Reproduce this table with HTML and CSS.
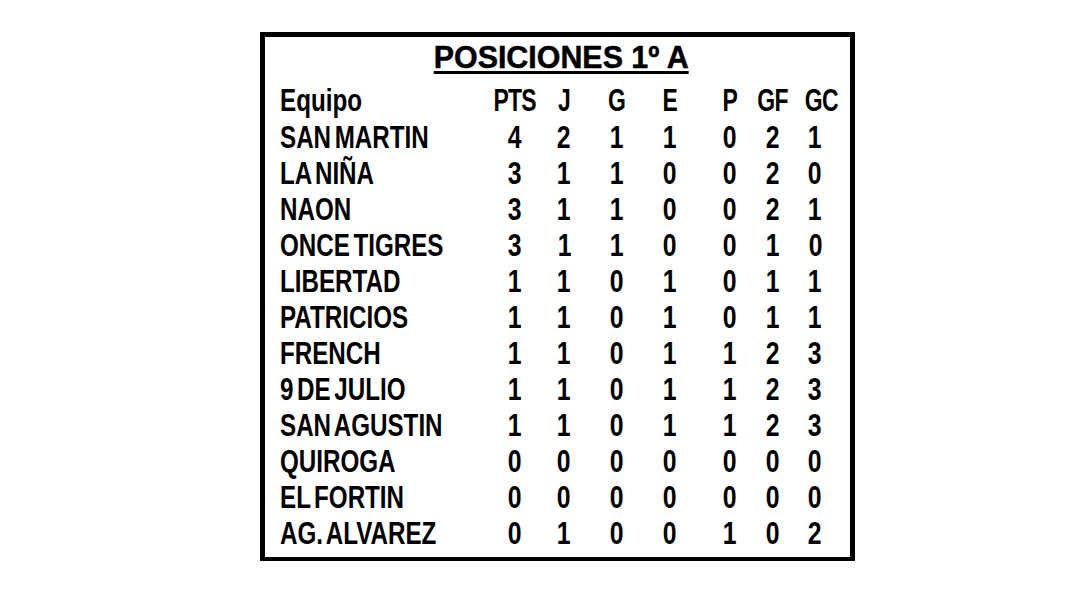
FILE: index.html
```html
<!DOCTYPE html>
<html lang="es">
<head>
<meta charset="utf-8">
<title>Posiciones 1º A</title>
<link rel="stylesheet" href="styles.css">
</head>
<body>
<div class="board">
  <h1 class="title"><span>POSICIONES 1º A</span></h1>
  <div class="table">
    <div class="row head">
      <div class="name"><span>Equipo</span></div>
      <div class="c pts"><span>PTS</span></div><div class="c j"><span>J</span></div><div class="c g"><span>G</span></div><div class="c e"><span>E</span></div><div class="c p"><span>P</span></div><div class="c gf"><span>GF</span></div><div class="c gc gch"><span>GC</span></div>
    </div>
    <div class="row"><div class="name"><span>SAN MARTIN</span></div><div class="c pts"><span>4</span></div><div class="c j"><span>2</span></div><div class="c g"><span>1</span></div><div class="c e"><span>1</span></div><div class="c p"><span>0</span></div><div class="c gf"><span>2</span></div><div class="c gc"><span>1</span></div></div>
    <div class="row"><div class="name"><span>LA NIÑA</span></div><div class="c pts"><span>3</span></div><div class="c j"><span>1</span></div><div class="c g"><span>1</span></div><div class="c e"><span>0</span></div><div class="c p"><span>0</span></div><div class="c gf"><span>2</span></div><div class="c gc"><span>0</span></div></div>
    <div class="row"><div class="name"><span>NAON</span></div><div class="c pts"><span>3</span></div><div class="c j"><span>1</span></div><div class="c g"><span>1</span></div><div class="c e"><span>0</span></div><div class="c p"><span>0</span></div><div class="c gf"><span>2</span></div><div class="c gc"><span>1</span></div></div>
    <div class="row"><div class="name"><span>ONCE TIGRES</span></div><div class="c pts"><span>3</span></div><div class="c j"><span>1</span></div><div class="c g"><span>1</span></div><div class="c e"><span>0</span></div><div class="c p"><span>0</span></div><div class="c gf"><span>1</span></div><div class="c gc"><span>0</span></div></div>
    <div class="row"><div class="name"><span>LIBERTAD</span></div><div class="c pts"><span>1</span></div><div class="c j"><span>1</span></div><div class="c g"><span>0</span></div><div class="c e"><span>1</span></div><div class="c p"><span>0</span></div><div class="c gf"><span>1</span></div><div class="c gc"><span>1</span></div></div>
    <div class="row"><div class="name"><span>PATRICIOS</span></div><div class="c pts"><span>1</span></div><div class="c j"><span>1</span></div><div class="c g"><span>0</span></div><div class="c e"><span>1</span></div><div class="c p"><span>0</span></div><div class="c gf"><span>1</span></div><div class="c gc"><span>1</span></div></div>
    <div class="row"><div class="name"><span>FRENCH</span></div><div class="c pts"><span>1</span></div><div class="c j"><span>1</span></div><div class="c g"><span>0</span></div><div class="c e"><span>1</span></div><div class="c p"><span>1</span></div><div class="c gf"><span>2</span></div><div class="c gc"><span>3</span></div></div>
    <div class="row"><div class="name"><span>9 DE JULIO</span></div><div class="c pts"><span>1</span></div><div class="c j"><span>1</span></div><div class="c g"><span>0</span></div><div class="c e"><span>1</span></div><div class="c p"><span>1</span></div><div class="c gf"><span>2</span></div><div class="c gc"><span>3</span></div></div>
    <div class="row"><div class="name"><span>SAN AGUSTIN</span></div><div class="c pts"><span>1</span></div><div class="c j"><span>1</span></div><div class="c g"><span>0</span></div><div class="c e"><span>1</span></div><div class="c p"><span>1</span></div><div class="c gf"><span>2</span></div><div class="c gc"><span>3</span></div></div>
    <div class="row"><div class="name"><span>QUIROGA</span></div><div class="c pts"><span>0</span></div><div class="c j"><span>0</span></div><div class="c g"><span>0</span></div><div class="c e"><span>0</span></div><div class="c p"><span>0</span></div><div class="c gf"><span>0</span></div><div class="c gc"><span>0</span></div></div>
    <div class="row"><div class="name"><span>EL FORTIN</span></div><div class="c pts"><span>0</span></div><div class="c j"><span>0</span></div><div class="c g"><span>0</span></div><div class="c e"><span>0</span></div><div class="c p"><span>0</span></div><div class="c gf"><span>0</span></div><div class="c gc"><span>0</span></div></div>
    <div class="row"><div class="name"><span>AG. ALVAREZ</span></div><div class="c pts"><span>0</span></div><div class="c j"><span>1</span></div><div class="c g"><span>0</span></div><div class="c e"><span>0</span></div><div class="c p"><span>1</span></div><div class="c gf"><span>0</span></div><div class="c gc"><span>2</span></div></div>
  </div>
</div>
</body>
</html>
```

FILE: styles.css
```css
html, body {
  margin: 0;
  padding: 0;
  background: #ffffff;
}

body {
  font-family: "Liberation Sans", Arial, sans-serif;
  color: #000000;
}

.board {
  box-sizing: border-box;
  width: 595px;
  height: 529px;
  margin: 32px 0 0 260px;
  border-style: solid;
  border-color: #000000;
  border-width: 5px 5px 4px 5px;
  background: #ffffff;
  padding-top: 2px;
}

.title {
  margin: 0 0 8px 0;
  font-weight: 700;
  font-size: 32px;
  line-height: 36px;
  text-align: center;
  padding-left: 8px;
}

.title span {
  display: inline-block;
  transform: scaleX(0.95);
  text-decoration: underline;
  text-decoration-thickness: 3px;
  text-underline-offset: 3px;
  -webkit-text-stroke: 0.5px #000000;
}

.table {
  display: flex;
  flex-direction: column;
}

.row {
  display: flex;
  font-weight: 700;
  font-size: 31px;
  line-height: 36px;
}

.row.head {
  margin-bottom: 1px;
}

.name {
  width: 210px;
  padding-left: 15px;
  white-space: nowrap;
}

.name span {
  display: inline-block;
  transform: scaleX(0.78);
  transform-origin: left center;
  word-spacing: -4px;
}

.c {
  display: flex;
  justify-content: center;
  white-space: nowrap;
}

.c span {
  display: inline-block;
  transform: scaleX(0.8);
}

.head .c span {
  transform: scaleX(0.74);
  letter-spacing: -1px;
}

.pts { width: 50px; }
.j   { width: 50px; }
.g   { width: 56px; }
.e   { width: 50px; }
.p   { width: 70px; }
.gf  { width: 16px; }
.gc  { width: 70px; }

.gch { padding-left: 12px; box-sizing: border-box; }
```
